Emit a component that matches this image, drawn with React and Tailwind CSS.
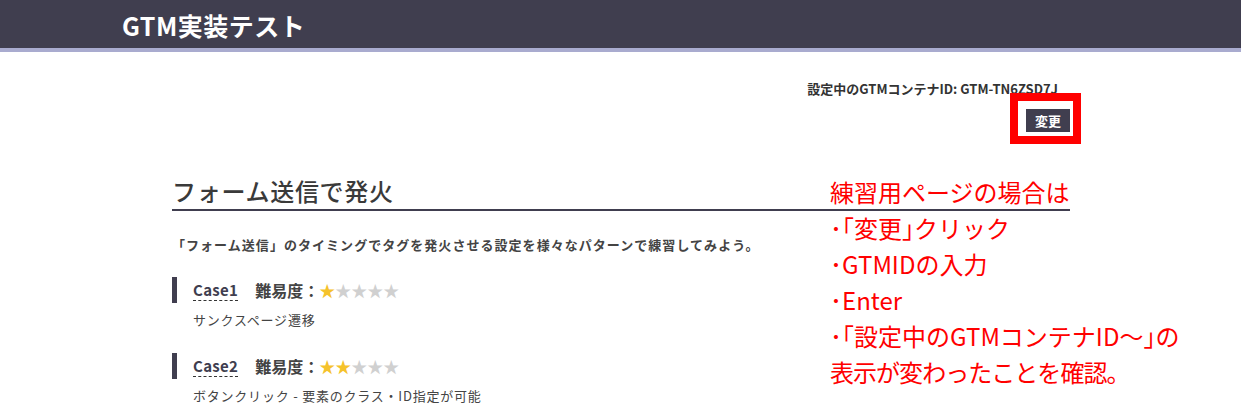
import React from 'react';

const cases = [
  { name: 'Case1', level: 1, desc: 'サンクスページ遷移' },
  { name: 'Case2', level: 2, desc: 'ボタンクリック - 要素のクラス・ID指定が可能' },
];

function Stars({ level }) {
  return (
    <span className="text-[16px] leading-none">
      {[1, 2, 3, 4, 5].map((n) => (
        <span key={n} className={n <= level ? 'text-[#f5c22b]' : 'text-[#d0d0d0]'}>
          ★
        </span>
      ))}
    </span>
  );
}

export default function App() {
  return (
    <div className="relative min-h-screen bg-white font-['Noto_Sans_CJK_JP',sans-serif] text-[#3a3a3a]">
      {/* header */}
      <header className="h-[52px] bg-[#403e4f] border-b-4 border-[#a9abcf] flex items-center pl-[122px]">
        <h1 className="text-white text-[25px] font-bold tracking-[0.02em] leading-none pt-[2px]">GTM実装テスト</h1>
      </header>

      <main className="w-[898px] ml-[172px]">
        {/* container id */}
        <div className="flex flex-col items-end pt-[27px]">
          <p className="text-[13px] font-bold leading-[20px] text-[#333] mr-[12px]">
            設定中のGTMコンテナID: GTM-TN6ZSD7J
          </p>
          <div className="relative mt-[8px]">
            <button className="bg-[#403e4f] text-white text-[13px] font-bold leading-[23px] px-[9px]">
              変更
            </button>
            <div className="absolute -left-[16px] -right-[11px] -top-[14px] -bottom-[12px] border-[8px] border-[#ff0000] pointer-events-none" />
          </div>
        </div>

        {/* section */}
        <h2 className="mt-[42px] text-[24px] font-medium tracking-[0.03em] leading-[34px] text-[#3a3a3a] pb-[1px] border-b-2 border-[#403e4f]">
          フォーム送信で発火
        </h2>
        <p className="mt-[24px] text-[13px] font-bold tracking-[0.08em] leading-[20px] text-[#444]">
          「フォーム送信」のタイミングでタグを発火させる設定を様々なパターンで練習してみよう。
        </p>

        <div className="mt-[22px] flex flex-col gap-[23px]">
          {cases.map((c) => (
            <div key={c.name}>
              <div className="flex items-center border-l-[5px] border-[#403e4f] h-[26px] pl-[16px]">
                <span className="text-[15px] font-bold text-[#403e4f] tracking-[0.02em] leading-[20px] border-b border-dashed border-[#333]">
                  {c.name}
                </span>
                <span className="ml-[17px] text-[16px] font-bold text-[#444] leading-none">難易度：</span>
                <Stars level={c.level} />
              </div>
              <p className="mt-[7px] pl-[21px] text-[13px] tracking-[0.06em] leading-[20px] text-[#444]">
                {c.desc}
              </p>
            </div>
          ))}
        </div>
      </main>

      {/* red annotation overlay */}
      <div className="absolute left-[830px] top-[174px] text-[#ff0000] text-[24px] leading-[36px] font-normal font-['Noto_Sans_CJK_JP',sans-serif]">
        <p>練習用ページの場合は</p>
        <p>･｢変更｣クリック</p>
        <p>･GTMIDの入力</p>
        <p>･Enter</p>
        <p>･｢設定中のGTMコンテナID〜｣の</p>
        <p className="tracking-[-0.04em]">表示が変わったことを確認。</p>
      </div>
    </div>
  );
}
